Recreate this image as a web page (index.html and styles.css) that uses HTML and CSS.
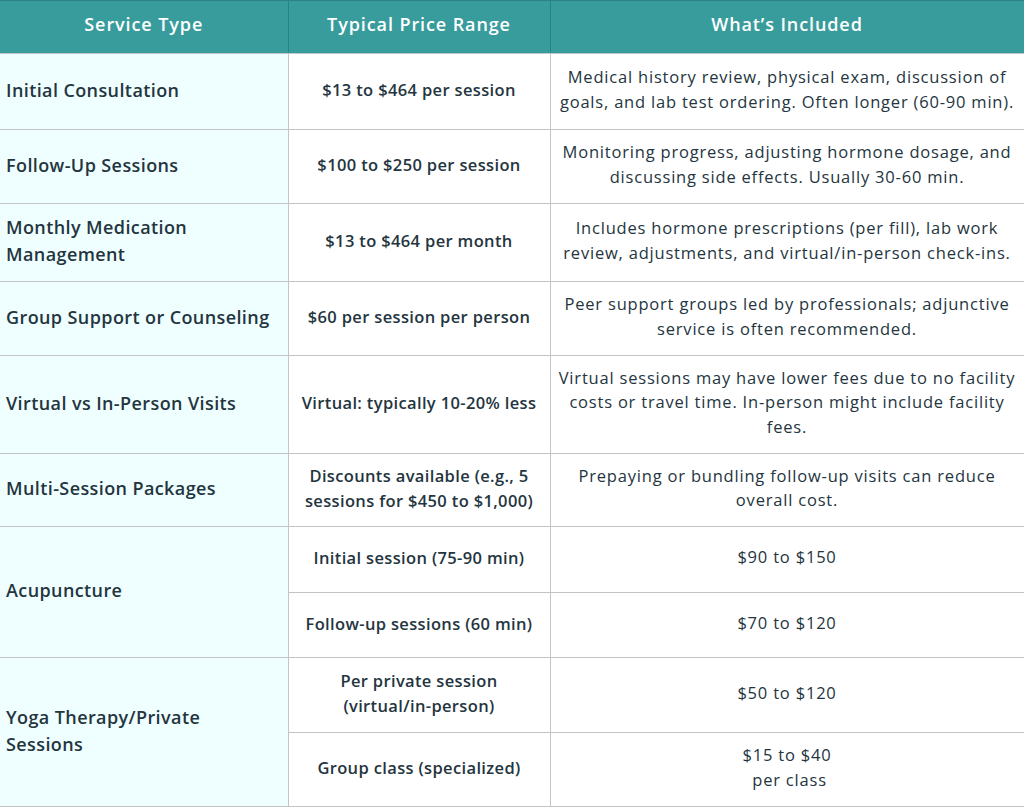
FILE: index.html
```html
<!DOCTYPE html>
<html>
<head>
<meta charset="utf-8">
<link rel="stylesheet" href="styles.css">
</head>
<body>
<table class="price-table">
  <colgroup>
    <col class="c1"><col class="c2"><col class="c3">
  </colgroup>
  <thead>
    <tr class="h-head">
      <th>Service Type</th>
      <th>Typical Price Range</th>
      <th>What’s Included</th>
    </tr>
  </thead>
  <tbody>
    <tr class="h76">
      <td class="svc">Initial Consultation</td>
      <td class="price">$13 to $464 per session</td>
      <td class="inc">Medical history review, physical exam, discussion of goals, and lab test ordering. Often longer (60-90 min).</td>
    </tr>
    <tr class="h74">
      <td class="svc">Follow-Up Sessions</td>
      <td class="price">$100 to $250 per session</td>
      <td class="inc">Monitoring progress, adjusting hormone dosage, and discussing side effects. Usually 30-60 min.</td>
    </tr>
    <tr class="h78">
      <td class="svc">Monthly Medication Management</td>
      <td class="price">$13 to $464 per month</td>
      <td class="inc">Includes hormone prescriptions (per fill), lab work review, adjustments, and virtual/in-person check-ins.</td>
    </tr>
    <tr class="h74">
      <td class="svc">Group Support or Counseling</td>
      <td class="price">$60 per session per person</td>
      <td class="inc">Peer support groups led by professionals; adjunctive service is often recommended.</td>
    </tr>
    <tr class="h98">
      <td class="svc">Virtual vs In-Person Visits</td>
      <td class="price">Virtual: typically 10-20% less</td>
      <td class="inc">Virtual sessions may have lower fees due to no facility costs or travel time. In-person might include facility fees.</td>
    </tr>
    <tr class="h73">
      <td class="svc">Multi-Session Packages</td>
      <td class="price">Discounts available (e.g., 5 sessions for $450 to $1,000)</td>
      <td class="inc">Prepaying or bundling follow-up visits can reduce overall cost.</td>
    </tr>
    <tr class="h66">
      <td class="svc" rowspan="2">Acupuncture</td>
      <td class="price">Initial session (75-90 min)</td>
      <td class="inc">$90 to $150</td>
    </tr>
    <tr class="h65">
      <td class="price">Follow-up sessions (60 min)</td>
      <td class="inc">$70 to $120</td>
    </tr>
    <tr class="h75">
      <td class="svc" rowspan="2">Yoga Therapy/Private<br>Sessions</td>
      <td class="price">Per private session (virtual/in-person)</td>
      <td class="inc">$50 to $120</td>
    </tr>
    <tr class="h74">
      <td class="price">Group class (specialized)</td>
      <td class="inc">$15 to $40<br>&nbsp;per class</td>
    </tr>
  </tbody>
</table>
</body>
</html>
```

FILE: styles.css
```css
html, body {
  margin: 0;
  padding: 0;
  background: #ffffff;
}
body {
  font-family: "Open Sans", "Liberation Sans", sans-serif;
  color: #243540;
}
.price-table {
  width: 1024px;
  border-collapse: collapse;
  table-layout: fixed;
}
.c1 { width: 288px; }
.c2 { width: 262px; }
.c3 { width: 474px; }

.price-table th {
  background: #389c9c;
  color: #ffffff;
  font-size: 18px;
  letter-spacing: 0.9px;
  font-weight: 600;
  height: 45px;
  padding: 0 8px 7px;
  border-left: 1px solid #2b8283;
  border-right: 1px solid #2b8283;
  border-top: 1px solid #2b8283;
  border-bottom: 1px solid #bfc8c8;
  text-align: center;
  vertical-align: middle;
}
.price-table th:first-child { border-left: none; }

.price-table td {
  border: 1px solid #c4c4c4;
  vertical-align: middle;
  line-height: 25px;
  padding: 0 8px 4px;
}
.price-table td.svc {
  background: #efffff;
  border-left: none;
  font-size: 18px;
  letter-spacing: 0.4px;
  font-weight: 600;
  text-align: left;
  padding: 0 8px 3px 6px;
  line-height: 27px;
}
.price-table td.price {
  font-size: 16.5px;
  letter-spacing: 0.35px;
  font-weight: 600;
  text-align: center;
  padding: 0 10px 4px;
}
.price-table td.inc {
  font-size: 16.5px;
  letter-spacing: 0.8px;
  font-weight: 400;
  text-align: center;
  padding: 0 6px 4px;
  line-height: 24.5px;
}
.h76 { height: 76px; }
.h74 { height: 74px; }
.h78 { height: 78px; }
.h98 { height: 98px; }
.h73 { height: 73px; }
.h66 { height: 66px; }
.h65 { height: 65px; }
.h75 { height: 75px; }
```
